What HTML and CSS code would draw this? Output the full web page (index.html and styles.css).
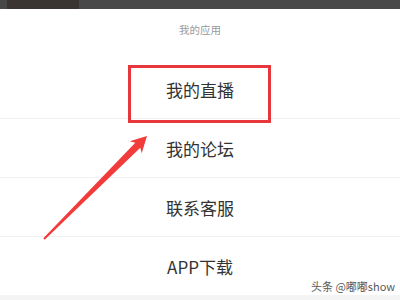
FILE: index.html
```html
<!DOCTYPE html>
<html lang="zh">
<head>
<meta charset="utf-8">
<link rel="stylesheet" href="styles.css">
</head>
<body>
<div class="screen">
  <div class="topbar"><div class="thumb"></div></div>
  <div class="header">我的应用</div>
  <ul class="list">
    <li class="row">我的直播</li>
    <li class="row">我的论坛</li>
    <li class="row">联系客服</li>
    <li class="row last">APP下载</li>
  </ul>
  <div class="footer"></div>
  <div class="highlight"></div>
  <svg class="arrow" width="400" height="300" viewBox="0 0 400 300">
    <polygon points="147,136 141.7,153.3 140.3,147.7 44.7,239.7 43.3,238.3 135.3,142.7 129.7,141.3" fill="#f23b3b"/>
  </svg>
  <div class="watermark">头条 @嘟嘟show</div>
</div>
</body>
</html>
```
FILE: styles.css
```css
* { box-sizing: border-box; }
html, body { margin: 0; padding: 0; }
body {
  background: #ffffff;
  font-family: "Noto Sans CJK SC", "Noto Sans", sans-serif;
}
.screen {
  position: relative;
  width: 400px;
  height: 300px;
  overflow: hidden;
  display: flex;
  flex-direction: column;
}
.topbar {
  height: 9px;
  background: #484848;
  padding-left: 7px;
  flex: none;
}
.thumb {
  width: 72px;
  height: 9px;
  background: #3a3532;
}
.header {
  height: 51px;
  flex: none;
  text-align: center;
  font-size: 10.5px;
  color: #9a9a9a;
  padding-top: 13px;
  line-height: 16px;
}
.list {
  list-style: none;
  margin: 0;
  padding: 0;
  flex: none;
}
.row {
  height: 59px;
  border-bottom: 1px solid #f0f0f0;
  display: flex;
  align-items: center;
  justify-content: center;
  font-size: 17px;
  color: #333333;
}
.row.last {
  border-bottom: none;
  height: 58px;
}
.footer {
  flex: 1;
  background: #f4f4f4;
}
.highlight {
  position: absolute;
  left: 128px;
  top: 65px;
  width: 143px;
  height: 58px;
  border: 3px solid #e8373c;
}
.arrow {
  position: absolute;
  left: 0;
  top: 0;
}
.watermark {
  position: absolute;
  left: 311px;
  top: 278px;
  font-size: 11px;
  line-height: 16px;
  color: #5a5a5a;
  white-space: nowrap;
}
```
